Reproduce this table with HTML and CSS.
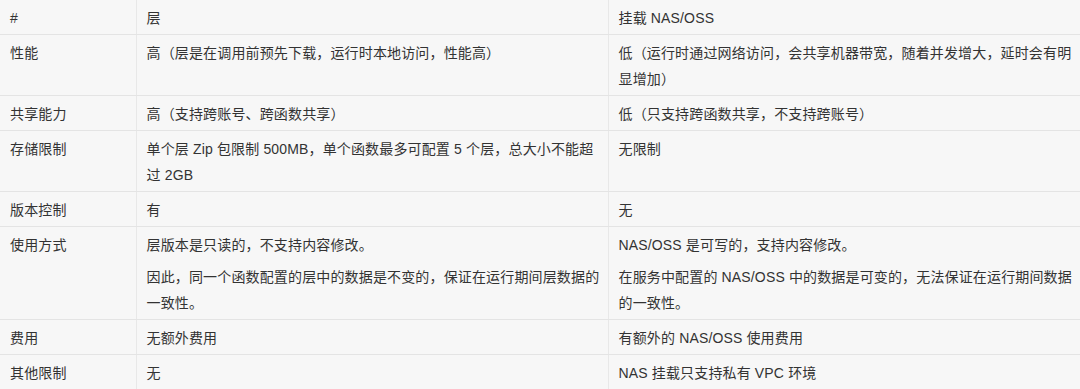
FILE: index.html
```html
<!DOCTYPE html>
<html lang="zh-CN">
<head>
<meta charset="utf-8">
<title>层 vs 挂载 NAS/OSS</title>
<link rel="stylesheet" href="styles.css">
</head>
<body>
<table class="cmp">
  <colgroup>
    <col class="c1">
    <col class="c2">
    <col class="c3">
  </colgroup>
  <tbody>
    <tr><td>#</td><td>层</td><td>挂载 NAS/OSS</td></tr>
    <tr><td>性能</td><td>高（层是在调用前预先下载，运行时本地访问，性能高）</td><td>低（运行时通过网络访问，会共享机器带宽，随着并发增大，延时会有明显增加）</td></tr>
    <tr><td>共享能力</td><td>高（支持跨账号、跨函数共享）</td><td>低（只支持跨函数共享，不支持跨账号）</td></tr>
    <tr><td>存储限制</td><td>单个层 Zip 包限制 500MB，单个函数最多可配置 5 个层，总大小不能超过 2GB</td><td>无限制</td></tr>
    <tr><td>版本控制</td><td>有</td><td>无</td></tr>
    <tr><td>使用方式</td>
      <td><p class="para">层版本是只读的，不支持内容修改。</p><p class="para">因此，同一个函数配置的层中的数据是不变的，保证在运行期间层数据的一致性。</p></td>
      <td><p class="para">NAS/OSS 是可写的，支持内容修改。</p><p class="para">在服务中配置的 NAS/OSS 中的数据是可变的，无法保证在运行期间数据的一致性。</p></td></tr>
    <tr><td>费用</td><td>无额外费用</td><td>有额外的 NAS/OSS 使用费用</td></tr>
    <tr><td>其他限制</td><td>无</td><td>NAS 挂载只支持私有 VPC 环境</td></tr>
  </tbody>
</table>
</body>
</html>
```
FILE: styles.css
```css
html, body {
  margin: 0;
  padding: 0;
  background: #f7f7f7;
}
body {
  font-family: "Liberation Sans", "Noto Sans CJK SC", sans-serif;
  font-size: 14px;
  color: #333333;
  letter-spacing: 0.15px;
}
.cmp {
  width: 1080px;
  table-layout: fixed;
  border-collapse: collapse;
  border-spacing: 0;
}
.c1 { width: 136px; }
.c2 { width: 472px; }
.c3 { width: 472px; }
.cmp td {
  vertical-align: top;
  padding: 5px 4px 3px 10px;
  line-height: 26px;
  border-bottom: 1px solid #e4e4e4;
  border-left: 1px solid #e8e8e8;
  word-break: break-all;
}
.cmp td:first-child {
  border-left: none;
}
.para {
  margin: 0;
}
.para + .para {
  margin-top: 6px;
}
```
